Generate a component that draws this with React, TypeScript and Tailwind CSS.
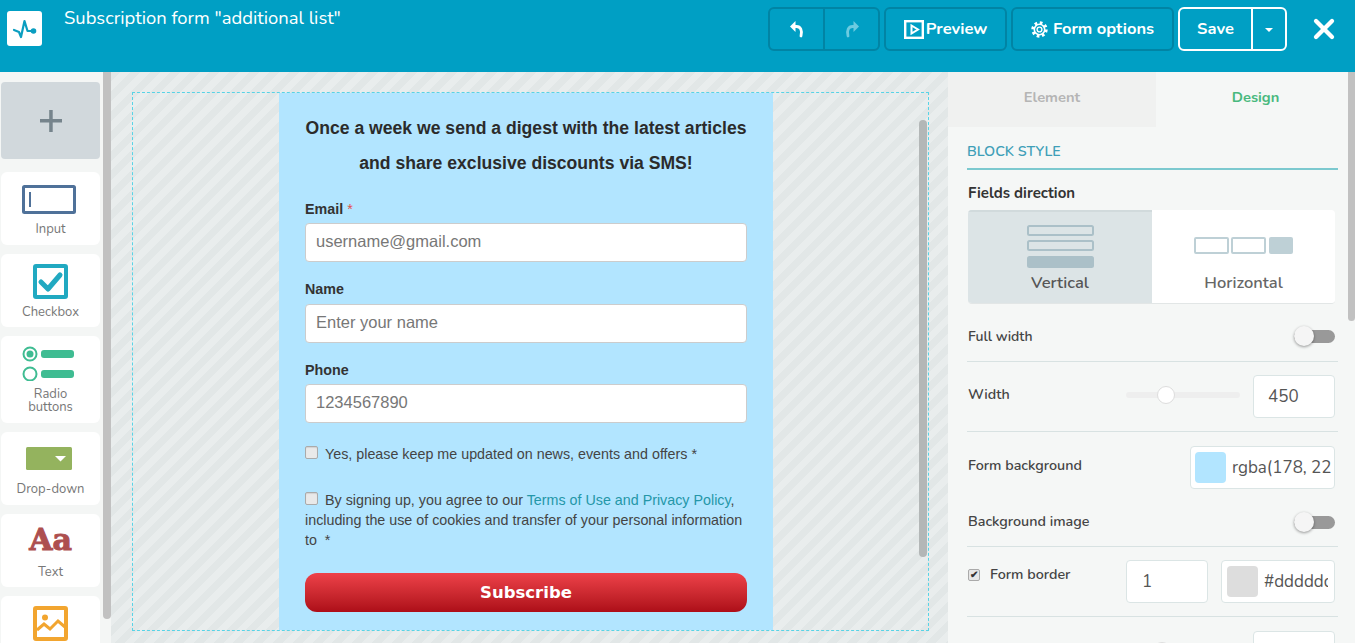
import { X } from "lucide-react";

const ui = "font-['Nunito','Lato','Noto_Sans',sans-serif]";

function Toggle() {
  return (
    <div className="relative h-[13px] w-[41px] rounded-full bg-[#999]">
      <span className="absolute left-0 top-[-4px] h-5 w-5 rounded-full bg-[#f5f5f5] shadow-[0_1px_3px_rgba(0,0,0,0.4)]" />
    </div>
  );
}

function Divider() {
  return <div className="h-px w-[371px] bg-[#d8e2e2]" />;
}

function Box({ className, children }: { className: string; children?: React.ReactNode }) {
  return (
    <div className={`flex items-center rounded border border-[#dbe5e5] bg-white text-[#555] ${className}`}>
      {children}
    </div>
  );
}

function ToolCard({
  label,
  className,
  children,
}: {
  label?: React.ReactNode;
  className: string;
  children: React.ReactNode;
}) {
  return (
    <div className={`ml-px flex w-[99px] flex-col items-center rounded-md bg-white text-center text-[13px] leading-[13px] text-[#777] ${className}`}>
      {children}
      {label && <span>{label}</span>}
    </div>
  );
}

function Sidebar() {
  return (
    <aside className="relative w-[111px] shrink-0 overflow-hidden bg-[#f4f6f5] pt-[10px]">
      <div className="ml-px flex h-[77px] w-[99px] items-center justify-center rounded bg-[#d1d8dc]">
        <svg width="22" height="22" viewBox="0 0 22 22" fill="#76848c">
          <rect x="0" y="9" width="22" height="3.5" />
          <rect x="9.2" y="0" width="3.5" height="22" />
        </svg>
      </div>
      <div className="mt-[13px] flex flex-col gap-[9px]">
        <ToolCard label="Input" className="h-[73px] pt-[13px]">
          <svg width="54" height="29" viewBox="0 0 54 29" className="mb-[9px] mr-[3px]">
            <rect x="1.5" y="1.5" width="51" height="26" rx="1" fill="#fff" stroke="#4f7199" strokeWidth="3" />
            <rect x="7" y="7" width="2" height="15" fill="#4f7199" />
          </svg>
        </ToolCard>
        <ToolCard label="Checkbox" className="h-[73px] pt-[10px]">
          <svg width="35" height="35" viewBox="0 0 35 35" className="mb-[7px]">
            <rect x="2" y="2" width="31" height="31" rx="1" fill="#fff" stroke="#21a9c1" strokeWidth="4" />
            <path d="M8 18 L15 25 L27 11" fill="none" stroke="#21a9c1" strokeWidth="5" strokeLinecap="round" strokeLinejoin="round" />
          </svg>
        </ToolCard>
        <ToolCard label={<>Radio<br />buttons</>} className="h-[87px] pt-[10px]">
          <svg width="52" height="35" viewBox="0 0 52 35" className="mb-[7px] mr-[5px]">
            <circle cx="8" cy="8" r="6.5" fill="none" stroke="#3fbc92" strokeWidth="2" />
            <circle cx="8" cy="8" r="3.5" fill="#3fbc92" />
            <circle cx="8" cy="28" r="6.5" fill="none" stroke="#3fbc92" strokeWidth="2" />
            <rect x="19" y="4" width="33" height="8" rx="3" fill="#3fbc92" />
            <rect x="19" y="24" width="33" height="8" rx="3" fill="#3fbc92" />
          </svg>
        </ToolCard>
        <ToolCard label="Drop-down" className="h-[73px] pt-[15px]">
          <svg width="46" height="23" viewBox="0 0 46 23" className="mb-[13px] mr-[3px]">
            <rect width="46" height="23" rx="1.5" fill="#94b35e" />
            <path d="M29 9 H40 L34.5 14.5 Z" fill="#fff" />
          </svg>
        </ToolCard>
        <ToolCard label="Text" className="h-[73px] pt-[10px]">
          <span className="mb-[10px] h-[32px] font-['DejaVu_Serif',serif] text-[30px] font-bold leading-[32px] text-[#ad4f4f] [-webkit-text-stroke:1px_#ad4f4f]">
            Aa
          </span>
        </ToolCard>
        <ToolCard className="h-[73px] pt-[10px]">
          <svg width="35" height="35" viewBox="0 0 35 35">
            <rect x="2" y="2" width="31" height="31" rx="1" fill="#fff" stroke="#f2a52f" strokeWidth="4" />
            <circle cx="12" cy="11.5" r="3" fill="#f2a52f" />
            <path d="M4 24 L11 18 L17 23 L25 15 L32 21" fill="none" stroke="#f2a52f" strokeWidth="3" />
          </svg>
        </ToolCard>
      </div>
      <div className="absolute left-[103px] top-0 h-[547px] w-2 rounded-b bg-[#c1c1c1]" />
    </aside>
  );
}

function Field({
  label,
  required,
  placeholder,
  className,
  gap,
}: {
  label: string;
  required?: boolean;
  placeholder: string;
  className: string;
  gap: string;
}) {
  return (
    <div className={className}>
      <div className="text-[14.3px] font-bold leading-[16px] text-[#333]">
        {label}
        {required && <span className="font-normal text-[#e0504d]"> *</span>}
      </div>
      <div className={`${gap} flex h-[39px] items-center rounded border border-[#ccc] bg-white px-[10px] pb-[2px] text-[16.5px] text-[#777]`}>
        {placeholder}
      </div>
    </div>
  );
}

function Check() {
  return (
    <span className="mr-[7px] inline-block h-[13px] w-[13px] rounded-[2px] border border-[#aaa] bg-[#e9e9e9] shadow-[inset_0_1px_1px_rgba(0,0,0,0.1)]" />
  );
}

function Canvas() {
  return (
    <main className="h-full w-[837px] shrink-0 bg-[repeating-linear-gradient(135deg,#e2e7e7_0px,#e2e7e7_7px,#e9eded_7px,#e9eded_14px)] px-[21px] pt-5">
      <div className="relative h-[539px] w-[797px] border border-dashed border-[#58d3e6]">
        <div className="ml-[146px] h-full w-[494px] bg-[#b2e5ff] px-[26px] pt-[18px] font-['Liberation_Sans',sans-serif]">
          <h1 className="text-center text-[17.6px] font-bold leading-[35px] text-[#2b2b2b]">
            Once a week we send a digest with the latest articles
            <br />
            and share exclusive discounts via SMS!
          </h1>
          <Field label="Email" required placeholder="username@gmail.com" className="mt-[20px]" gap="mt-[6px]" />
          <Field label="Name" placeholder="Enter your name" className="mt-[19px]" gap="mt-[7px]" />
          <Field label="Phone" placeholder="1234567890" className="mt-[19px]" gap="mt-[6px]" />
          <p className="mt-[21px] text-[14.3px] leading-[20px] text-[#444]">
            <Check />
            Yes, please keep me updated on news, events and offers *
          </p>
          <p className="mt-[26px] text-[14.3px] leading-[20px] text-[#444]">
            <Check />
            By signing up, you agree to our <span className="text-[#2497a8]">Terms of Use and Privacy Policy</span>,
            including the use of cookies and transfer of your personal information to &nbsp;*
          </p>
          <button className="mt-[23px] h-[39px] w-[442px] rounded-xl bg-gradient-to-b from-[#ee4149] to-[#ad0d18] pt-[2px] font-['DejaVu_Sans',sans-serif] text-[16.5px] font-bold text-white">
            Subscribe
          </button>
        </div>
        <div className="absolute left-[786px] top-[27px] h-[437px] w-2 rounded-full bg-[#b3b7b7]" />
      </div>
    </main>
  );
}

function SettingsPanel() {
  return (
    <section className={`relative w-[407px] shrink-0 overflow-hidden bg-[#f5f7f6] ${ui}`}>
      <div className="flex h-[55px] text-[14.7px] font-bold leading-[51px]">
        <div className="w-[208px] bg-[#f0f1f0] text-center text-[#b5b5b5]">Element</div>
        <div className="flex-1 text-center text-[#49b97e]">Design</div>
      </div>
      <div className="pl-[19px]">
        <div className="mt-[15px] h-[28px] w-[371px] border-b-2 border-[#7cc9cf] text-[14.3px] font-semibold leading-5 text-[#3f9fb8]">
          BLOCK STYLE
        </div>
        <div className="ml-px mt-[13px] text-[15px] font-bold leading-5 text-[#333]">Fields direction</div>
        <div className="ml-px mt-[7px] flex h-[94px] w-[367px] overflow-hidden rounded border-b border-[#e2e6e6] text-[16.5px] font-semibold">
          <div className="flex w-[184px] flex-col items-center border-t-2 border-[#d1dadc] bg-[#dce4e6] pt-[13px] text-[#555]">
            <svg width="67" height="43" viewBox="0 0 67 43">
              <rect x="1" y="1" width="65" height="9" rx="1.5" fill="none" stroke="#abc0c8" strokeWidth="2" />
              <rect x="1" y="16" width="65" height="9" rx="1.5" fill="none" stroke="#abc0c8" strokeWidth="2" />
              <rect x="0" y="31" width="67" height="12" rx="2.5" fill="#abc0c8" />
            </svg>
            <span className="mt-[5px] leading-5">Vertical</span>
          </div>
          <div className="flex flex-1 flex-col items-center bg-white pt-[27px] text-[#666]">
            <svg width="100" height="17" viewBox="0 0 100 17">
              <rect x="1" y="1" width="33" height="15" rx="1" fill="none" stroke="#bed0d6" strokeWidth="2" />
              <rect x="38" y="1" width="33" height="15" rx="1" fill="none" stroke="#bed0d6" strokeWidth="2" />
              <rect x="75" y="0" width="24" height="17" rx="2" fill="#bed0d6" />
            </svg>
            <span className="mt-[19px] leading-5">Horizontal</span>
          </div>
        </div>
        <div className="flex h-[57px] w-[368px] items-center justify-between pl-px pt-[7px] text-[14px] font-semibold text-[#444]">
          Full width
          <Toggle />
        </div>
        <Divider />
        <div className="flex h-[69px] w-[368px] items-center pl-px text-[14.3px] font-semibold text-[#444]">
          <span className="mb-[4px] w-[158px]">Width</span>
          <div className="relative mb-[4px] h-[6px] w-[114px] rounded-full bg-[#eee]">
            <span className="absolute left-[31px] top-[-6px] h-[18px] w-[18px] rounded-full border border-[#ddd] bg-white" />
          </div>
          <Box className="ml-[13px] h-[43px] w-[82px] pl-[14px] text-[17px] font-normal">450</Box>
        </div>
        <Divider />
        <div className="mt-[14px] flex h-[43px] w-[368px] items-center justify-between pl-px text-[14.3px] font-semibold text-[#444]">
          <span className="mb-[4px]">Form background</span>
          <Box className="h-[43px] w-[145px] overflow-hidden pl-[4px] text-[17px] font-normal">
            <span className="h-[31px] w-[31px] shrink-0 rounded-sm bg-[#b2e5ff]" />
            <span className="ml-[6px] whitespace-nowrap">rgba(178, 22</span>
          </Box>
        </div>
        <div className="flex h-[44px] w-[368px] items-center justify-between pl-px pt-[22px] text-[14.3px] font-semibold text-[#444]">
          <span className="mt-[-1px]">Background image</span>
          <Toggle />
        </div>
        <div className="mt-[13px]">
          <Divider />
        </div>
        <div className="flex h-[69px] w-[368px] items-center pl-px text-[14.3px] font-semibold text-[#444]">
          <span className="mb-[14px] flex w-[158px] items-center">
            <span className="flex h-[12px] w-[12px] items-center justify-center rounded-[2px] border border-[#aaa] bg-[#e6e6e6] text-[10px] leading-none text-[#333]">
              ✔
            </span>
            <span className="ml-[10px]">Form border</span>
          </span>
          <Box className="h-[43px] w-[82px] pl-[15px] text-[17px] font-normal">1</Box>
          <Box className="ml-[13px] h-[43px] w-[114px] overflow-hidden pl-[5px] text-[17px] font-normal">
            <span className="h-[31px] w-[31px] shrink-0 rounded-sm bg-[#dddddd]" />
            <span className="ml-[6px] w-[64px] overflow-hidden whitespace-nowrap">#dddddd</span>
          </Box>
        </div>
        <Divider />
        <div className="mt-[14px] flex h-[43px] w-[368px] items-center pl-px">
          <div className="relative mb-[4px] ml-[158px] h-[6px] w-[114px] rounded-full bg-[#eee]">
            <span className="absolute left-[27px] top-[-6px] h-[18px] w-[18px] rounded-full border border-[#ddd] bg-white" />
          </div>
          <Box className="ml-[13px] h-[43px] w-[82px]" />
        </div>
      </div>
      <div className="absolute right-0 top-0 h-[249px] w-[7px] rounded-b bg-[#c1c1c1]" />
    </section>
  );
}

function Header() {
  const group = "flex h-[44px] items-center rounded-md border-2 border-[#0184a4]";
  return (
    <header className={`flex h-[72px] shrink-0 items-start bg-[#009fc4] text-white ${ui}`}>
      <div className="ml-[7px] mt-[11px] flex h-[35px] w-[35px] items-center justify-center rounded-[3px] bg-white">
        <svg width="26" height="26" viewBox="0 0 26 26" fill="none" stroke="#0b9ec0" strokeWidth="2.2" strokeLinejoin="round" strokeLinecap="round">
          <path d="M2 14 L7 16 L9 21 L12.5 5 L15.5 15 H21" />
          <circle cx="21.5" cy="15" r="1.7" fill="#0b9ec0" />
        </svg>
      </div>
      <div className="ml-[22px] mt-[6px] text-[18.4px] leading-[24px]">Subscription form "additional list"</div>
      <div className="ml-auto mt-[7px] flex items-start text-[16.5px] font-bold">
        <div className={`${group} w-[112px]`}>
          <div className="flex h-full w-[55px] items-center justify-center border-r-2 border-[#0184a4]">
            <svg width="16" height="18" viewBox="0 0 16 18" fill="none" stroke="#fff" strokeWidth="2.8" strokeLinecap="round">
              <path d="M1 6.5 L6.5 1 V12 Z" fill="#fff" stroke="none" />
              <path d="M5 6.5 H7.5 C11.5 6.5 13.5 10.5 12 16" />
            </svg>
          </div>
          <div className="flex flex-1 items-center justify-center">
            <svg width="16" height="18" viewBox="0 0 16 18" fill="none" stroke="#6ccbe0" strokeWidth="2.8" strokeLinecap="round">
              <path d="M15 6.5 L9.5 1 V12 Z" fill="#6ccbe0" stroke="none" />
              <path d="M11 6.5 H8.5 C4.5 6.5 2.5 10.5 4 16" />
            </svg>
          </div>
        </div>
        <div className={`${group} ml-[4px] w-[123px] justify-center`}>
          <svg width="20" height="19" viewBox="0 0 20 19" className="mr-[2px]">
            <rect x="1.2" y="1.2" width="17.6" height="16.6" fill="none" stroke="#fff" strokeWidth="2.4" />
            <path d="M7.5 5.5 L14 9.5 L7.5 13.5 Z" fill="none" stroke="#fff" strokeWidth="2" />
          </svg>
          Preview
        </div>
        <div className={`${group} ml-[4px] w-[163px] justify-center`}>
          <svg width="17" height="17" viewBox="0 0 17 17" fill="none" stroke="#fff" className="mr-[5px]">
            <circle cx="8.5" cy="8.5" r="6.6" strokeWidth="3.2" strokeDasharray="2.6 2.6" />
            <circle cx="8.5" cy="8.5" r="5.2" strokeWidth="1.6" />
            <circle cx="8.5" cy="8.5" r="2.4" strokeWidth="1.4" />
          </svg>
          Form options
        </div>
        <div className="ml-[4px] flex h-[44px] w-[109px] items-center rounded-md border-2 border-white">
          <div className="flex h-full w-[73px] items-center justify-center border-r-2 border-white">Save</div>
          <div className="flex flex-1 items-center justify-center">
            <span className="mt-[2px] h-0 w-0 border-x-[4px] border-t-[4px] border-x-transparent border-t-white" />
          </div>
        </div>
        <X size={32} strokeWidth={3.2} className="ml-[21px] mr-[15px] mt-[6px]" />
      </div>
    </header>
  );
}

export default function App() {
  return (
    <div className="flex h-[643px] w-[1355px] flex-col overflow-hidden bg-[#f4f6f5]">
      <Header />
      <div className={`flex min-h-0 flex-1 ${ui}`}>
        <Sidebar />
        <Canvas />
        <SettingsPanel />
      </div>
    </div>
  );
}
